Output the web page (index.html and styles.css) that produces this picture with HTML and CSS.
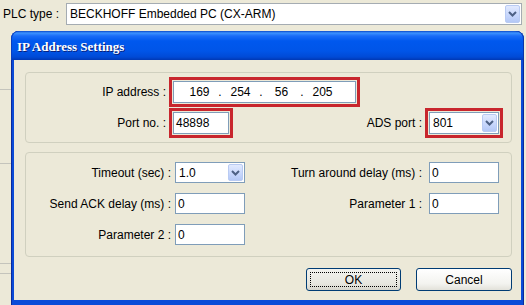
FILE: index.html
```html
<!DOCTYPE html>
<html lang="en">
<head>
    <meta charset="UTF-8">
    <meta name="viewport" content="width=device-width, initial-scale=1.0">
    <title>IP Address Settings</title>
    <link rel="stylesheet" href="styles.css">
</head>
<body>
    <div class="plc-row">
        <span class="plc-label">PLC type :</span>
        <div class="combo combo-plc">
            <span class="combo-text">BECKHOFF Embedded PC (CX-ARM)</span>
            <span class="combo-btn">
                <svg width="9" height="6" viewBox="0 0 9 6"><path d="M1 1 L4.5 4.5 L8 1" fill="none" stroke="#4d6185" stroke-width="2"/></svg>
            </span>
        </div>
    </div>

    <div class="desk">
        <div class="parent-edge"></div>

        <div class="window">
            <div class="title-bar">IP Address Settings</div>
            <div class="window-body">

                <!-- address group -->
                <div class="group group-address">
                    <span class="label">IP address :</span>
                    <div class="mark mark-ip">
                        <div class="field ip-field">
                            <span class="ip-part">169</span><span class="ip-dot">.</span>
                            <span class="ip-part">254</span><span class="ip-dot">.</span>
                            <span class="ip-part">56</span><span class="ip-dot">.</span>
                            <span class="ip-part">205</span>
                        </div>
                    </div>

                    <span class="label">Port no. :</span>
                    <div class="mark">
                        <div class="field port-field">48898</div>
                    </div>
                    <span class="label label-right">ADS port :</span>
                    <div class="mark">
                        <div class="combo combo-small">
                            <span class="combo-text">801</span>
                            <span class="combo-btn">
                                <svg width="9" height="6" viewBox="0 0 9 6"><path d="M1 1 L4.5 4.5 L8 1" fill="none" stroke="#4d6185" stroke-width="2"/></svg>
                            </span>
                        </div>
                    </div>
                </div>

                <!-- timing group -->
                <div class="group group-timing">
                    <span class="label">Timeout (sec) :</span>
                    <div class="combo combo-small combo-row">
                        <span class="combo-text">1.0</span>
                        <span class="combo-btn">
                            <svg width="9" height="6" viewBox="0 0 9 6"><path d="M1 1 L4.5 4.5 L8 1" fill="none" stroke="#4d6185" stroke-width="2"/></svg>
                        </span>
                    </div>
                    <span class="label label-right">Turn around delay (ms) :</span>
                    <div class="field small-field">0</div>

                    <span class="label">Send ACK delay (ms) :</span>
                    <div class="field small-field">0</div>
                    <span class="label label-right">Parameter 1 :</span>
                    <div class="field small-field">0</div>

                    <span class="label">Parameter 2 :</span>
                    <div class="field small-field">0</div>
                </div>

                <div class="buttons">
                    <button type="button" class="btn btn-default"><span class="focus">OK</span></button>
                    <button type="button" class="btn">Cancel</button>
                </div>

            </div>
        </div>
    </div>
</body>
</html>
```

FILE: styles.css
```css
/* page */
body {
    margin: 0;
    background-color: #ece9d8;
    font-family: "Liberation Sans", Arial, sans-serif;
    font-size: 12px;
    color: #000000;
    overflow: hidden;
}

/* parent window row */
.plc-row {
    display: flex;
    align-items: center;
    padding: 3px 0 0 3px;
    height: 22px;
}

.plc-label {
    width: 63px;
}

/* combo boxes */
.combo {
    display: flex;
    align-items: center;
    box-sizing: border-box;
    background: #ffffff;
    border: 1px solid #7f9db9;
}

.combo-plc {
    width: 456px;
    height: 22px;
    border-color: #a5acb2;
}

.combo-text {
    flex: 1;
    padding-left: 3px;
    white-space: nowrap;
}

.combo-btn {
    display: flex;
    align-items: center;
    justify-content: center;
    width: 15px;
    height: 18px;
    margin-right: 1px;
    border: 1px solid #b9cbf3;
    border-radius: 2px;
    background: linear-gradient(#e2eafe, #c6d6fc 60%, #b4c8f6);
    box-sizing: border-box;
}

.combo-small {
    width: 70px;
    height: 22px;
}

.combo-row {
    height: 21px;
}

.combo-row .combo-btn {
    height: 17px;
}

/* dialog */
.desk {
    display: flex;
    margin-top: 6px;
}

.parent-edge {
    width: 11px;
    height: 280px;
    background:
        linear-gradient(#c4c4bc, #c4c4bc) 0 58px / 11px 1px no-repeat,
        linear-gradient(#c4c4bc, #c4c4bc) 0 132px / 11px 1px no-repeat,
        linear-gradient(#c4c4bc, #c4c4bc) 0 232px / 11px 1px no-repeat,
        linear-gradient(#c4c4bc, #c4c4bc) 0 242px / 11px 1px no-repeat;
}

.window {
    width: 513px;
    background: #0a4bd8;
    border-radius: 8px 8px 0 0;
    box-shadow: inset 1px 0 #0a2a9c, inset -1px 0 #0a2a9c;
}

.title-bar {
    height: 29px;
    box-sizing: border-box;
    padding: 8px 0 0 6px;
    border-radius: 8px 8px 0 0;
    background: linear-gradient(#0a48c8 0, #3d93ff 2px, #1a6cf7 5px, #0058ee 10px, #0055e8 20px, #004ad6 26px, #0038b4 29px);
    box-shadow: inset -1px 0 #0a35a8, inset 1px 0 #0a3fc0;
    color: #ffffff;
    font-family: "Liberation Serif", "Times New Roman", serif;
    font-weight: bold;
    font-size: 13px;
    text-shadow: 1px 1px #0a1f78;
}

.window-body {
    margin: 0 3px 5px 3px;
    height: 240px;
    box-sizing: border-box;
    padding: 12px 9px 9px 11px;
    background-color: #ece9d8;
}

/* group boxes */
.group {
    display: grid;
    border: 1px solid #d0d0bf;
    border-radius: 4px;
    align-items: center;
}

.group-address {
    grid-template-columns: 143px 64px 192px 78px;
    grid-auto-rows: 30px;
    row-gap: 1px;
    padding: 4px 0;
}

.group-timing {
    grid-template-columns: 149px 70px 184px 70px;
    grid-auto-rows: 21px;
    row-gap: 10px;
    padding: 9px 0 11px 0;
    margin-top: 9px;
}

.label {
    text-align: right;
    padding-right: 3px;
    white-space: nowrap;
}

.group-timing .label {
    padding-right: 4px;
}

.group-timing .label-right {
    padding-right: 7px;
}

/* red marks round the important fields */
.mark {
    border: 3px solid #c8262d;
    padding: 1px;
    justify-self: start;
}

.mark-ip {
    grid-column: 2 / 5;
}

/* text fields */
.field {
    box-sizing: border-box;
    height: 22px;
    background: #ffffff;
    border: 1px solid #7f9db9;
    padding-left: 2px;
    display: flex;
    align-items: center;
}

.port-field {
    width: 56px;
}

.small-field {
    width: 70px;
    height: 21px;
}

.ip-field {
    width: 183px;
    padding-left: 9px;
}

.ip-part {
    width: 33px;
    text-align: center;
}

.ip-dot {
    width: 8px;
    text-align: center;
}

/* buttons */
.buttons {
    display: flex;
    justify-content: flex-end;
    gap: 15px;
    margin-top: 11px;
}

.btn {
    width: 96px;
    height: 23px;
    padding: 0;
    border: 1px solid #003c74;
    border-radius: 3px;
    background: linear-gradient(#ffffff, #f3f3ef 70%, #e2e1d9);
    font-family: "Liberation Sans", Arial, sans-serif;
    font-size: 12px;
    color: #000000;
}

.btn-default {
    width: 95px;
    background: linear-gradient(#f2f2ee, #e6e6df 70%, #d6d5cc);
    display: flex;
    padding: 3px;
}

.focus {
    flex: 1;
    display: flex;
    align-items: center;
    justify-content: center;
    border: 1px dotted #000000;
}
```
